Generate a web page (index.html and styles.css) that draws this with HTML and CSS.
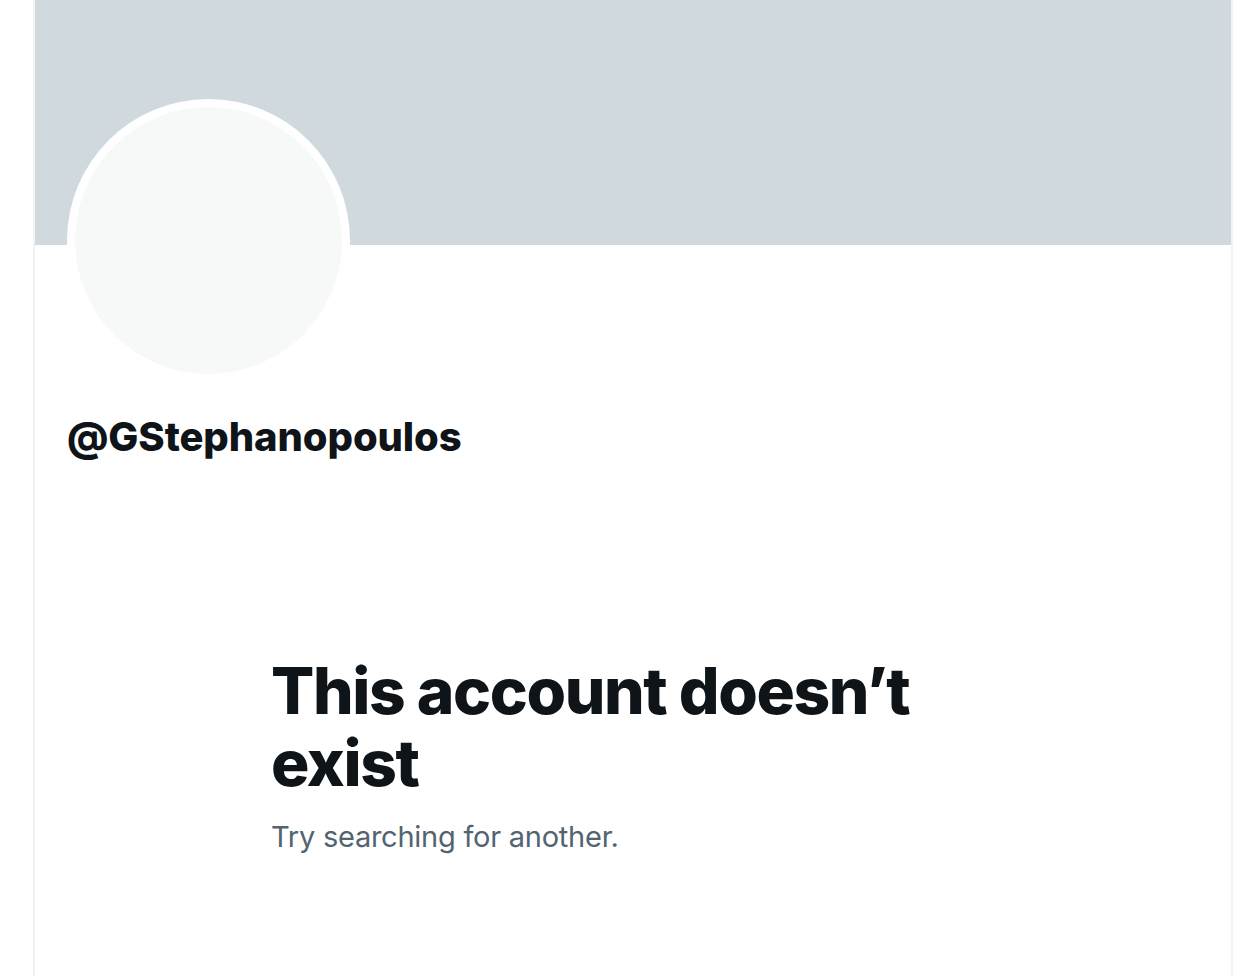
FILE: index.html
```html
<!DOCTYPE html>
<html lang="en">
<head>
  <meta charset="UTF-8" />
  <meta name="viewport" content="width=device-width, initial-scale=1.0" />
  <title>Profile / X</title>
  <link rel="stylesheet" href="styles.css">
</head>
<body>
  <main class="column" aria-label="Profile">
    <!-- Banner vacío -->
    <div class="banner"></div>

    <div class="profile-head">
      <div class="avatar">
        <div class="avatar-inner"></div>
      </div>
      <h1 class="handle">@GStephanopoulos</h1>
    </div>

    <div class="empty-state">
      <h2 class="empty-title">This account doesn’t exist</h2>
      <p class="empty-text">Try searching for another.</p>
    </div>
  </main>
</body>
</html>
```

FILE: styles.css
```css
body {
  margin: 0;
  background: #FFFFFF;
  color: #0F1419;
  font-family: Inter, 'Noto Sans', Arial, sans-serif;
}
.column {
  margin-left: 33px;
  width: 1196px;
  min-height: 976px;
  border-left: 2px solid #EFF3F4;
  border-right: 2px solid #EFF3F4;
}
.banner {
  height: 245px;
  background: #CFD9DE;
}
.profile-head {
  padding: 0 32px;
}
.avatar {
  width: 283px;
  height: 283px;
  margin-top: -146px;
  border-radius: 50%;
  background: #FFFFFF;
  padding: 8px;
  box-sizing: border-box;
}
.avatar-inner {
  width: 100%;
  height: 100%;
  border-radius: 50%;
  background: #F7F9F9;
}
.handle {
  margin: 31px 0 0;
  font-size: 40px;
  line-height: 48px;
  font-weight: 800;
  letter-spacing: -0.1px;
}
.empty-state {
  max-width: 724px;
  margin: 194px auto 0;
}
.empty-title {
  margin: 0 0 18px;
  font-size: 64px;
  line-height: 72px;
  font-weight: 800;
  letter-spacing: -1.4px;
}
.empty-text {
  margin: 0;
  font-size: 29px;
  line-height: 40px;
  letter-spacing: -0.25px;
  color: #536471;
}
```
